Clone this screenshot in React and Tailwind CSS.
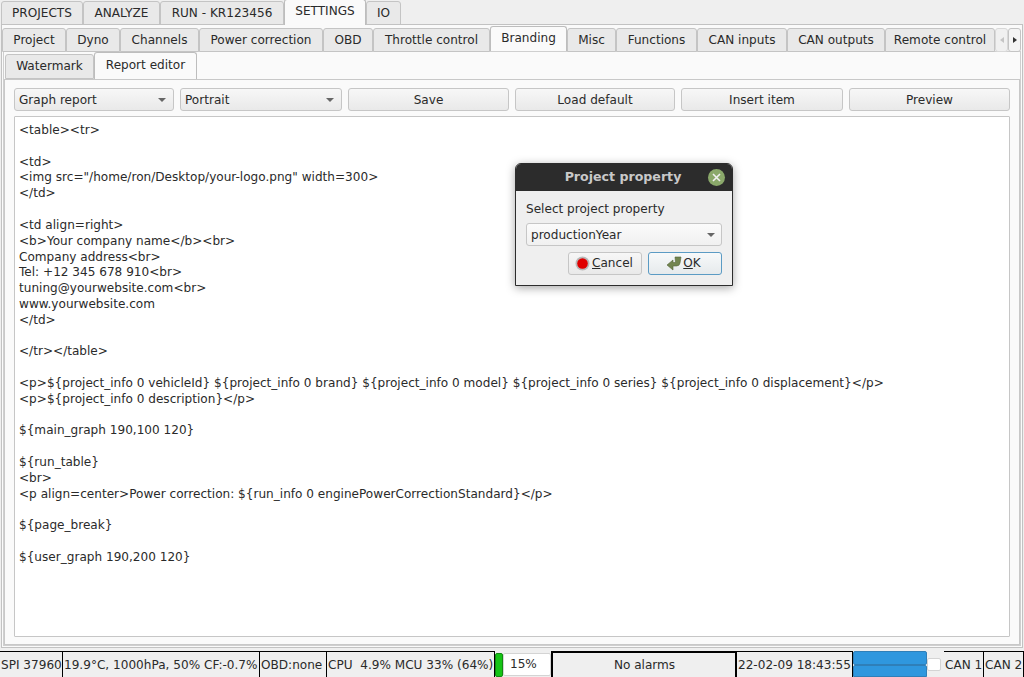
import React from "react";

const mainTabs = [
  { t: "PROJECTS", w: "w-[82px]" },
  { t: "ANALYZE", w: "w-[77px]" },
  { t: "RUN - KR123456", w: "w-[124px]" },
  { t: "SETTINGS", w: "w-[82px]", active: true },
  { t: "IO", w: "w-[35px]" },
];
const subTabs = [
  { t: "Project", w: "w-[64px]" },
  { t: "Dyno", w: "w-[54px]" },
  { t: "Channels", w: "w-[79px]" },
  { t: "Power correction", w: "w-[124px]" },
  { t: "OBD", w: "w-[50px]" },
  { t: "Throttle control", w: "w-[117px]" },
  { t: "Branding", w: "w-[77px]", active: true },
  { t: "Misc", w: "w-[49px]" },
  { t: "Functions", w: "w-[81px]" },
  { t: "CAN inputs", w: "w-[90px]" },
  { t: "CAN outputs", w: "w-[98px]" },
  { t: "Remote control", w: "w-[110px]" },
];
const code = `<table><tr>

<td>
<img src="/home/ron/Desktop/your-logo.png" width=300>
</td>

<td align=right>
<b>Your company name</b><br>
Company address<br>
Tel: +12 345 678 910<br>
tuning@yourwebsite.com<br>
www.yourwebsite.com
</td>

</tr></table>

<p>\${project_info 0 vehicleId} \${project_info 0 brand} \${project_info 0 model} \${project_info 0 series} \${project_info 0 displacement}</p>
<p>\${project_info 0 description}</p>

\${main_graph 190,100 120}

\${run_table}
<br>
<p align=center>Power correction: \${run_info 0 enginePowerCorrectionStandard}</p>

\${page_break}

\${user_graph 190,200 120}`;

function Tab({ t, w, active, h }) {
  return active ? (
    <div className={`${w} ${h} relative z-10 -mt-[2px] flex shrink-0 items-center justify-center rounded-t-[3px] border border-b-0 border-[#bdbdbd] bg-[#fafafa] pb-[2px] text-[#2a2a2a]`}>
      {t}
    </div>
  ) : (
    <div className={`${w} ${h} flex shrink-0 items-center justify-center rounded-t-[3px] border border-[#c4c4c4] bg-[#e9e9e9] text-[#2a2a2a]`}>
      {t}
    </div>
  );
}

function Combo({ t, w }) {
  return (
    <div className={`${w} flex h-[23px] shrink-0 items-center justify-between rounded-[3px] border border-[#c6c6c6] bg-gradient-to-b from-[#f7f7f7] to-[#e9e9e9] pl-[4px] pr-[7px] pt-[1px] text-[#2a2a2a]`}>
      <span>{t}</span>
      <Caret />
    </div>
  );
}
function Caret() {
  return (
    <svg width="8" height="4" viewBox="0 0 8 4"><path d="M0 0h8L4 4z" fill="#666" /></svg>
  );
}
function Btn({ t, w }) {
  return (
    <div className={`${w} flex h-[23px] shrink-0 items-center justify-center rounded-[3px] border border-[#c6c6c6] bg-gradient-to-b from-[#f7f7f7] to-[#e9e9e9] pt-[1px] text-[#2a2a2a]`}>
      {t}
    </div>
  );
}
function Cell({ w, children, center, thick }) {
  return (
    <div className={`${w} ${center ? "justify-center" : "justify-start"} ${thick ? "border-x-2 border-t-2 border-black" : "border-r border-t border-black"} flex h-full shrink-0 items-center overflow-hidden whitespace-nowrap bg-[#efefef] pl-[1px] pt-[1px] text-[#2a2a2a]`}>
      {children}
    </div>
  );
}

export default function App() {
  return (
    <div className="relative flex h-[677px] w-[1024px] flex-col overflow-hidden bg-[#efefef] font-['DejaVu_Sans',sans-serif] text-[12.08px]">
      {/* main tabs */}
      <div className="flex h-[24px] shrink-0 pl-[1px] pt-[1px]">
        {mainTabs.map((x) => (
          <Tab key={x.t} {...x} h={x.active ? "h-[26px]" : "h-[24px]"} />
        ))}
      </div>
      {/* main pane */}
      <div className="mx-[1px] flex h-[624px] shrink-0 flex-col border border-[#c2c2c2] bg-[#fafafa] pt-[3px]">
        <div className="relative flex h-[23px] shrink-0">
          {subTabs.map((x) => (
            <Tab key={x.t} {...x} h={x.active ? "h-[25px]" : "h-[24px]"} />
          ))}
          <div className="flex h-[24px] w-[13px] shrink-0 items-center justify-center rounded-[3px] border border-[#d8d8d8] bg-[#f0f0f0]">
            <svg width="4" height="6" viewBox="0 0 4 6"><path d="M4 0v6L0 3z" fill="#c4c4c4" /></svg>
          </div>
          <div className="flex h-[24px] w-[13px] shrink-0 items-center justify-center rounded-[3px] border border-[#c4c4c4] bg-[#f4f4f4]">
            <svg width="4" height="6" viewBox="0 0 4 6"><path d="M0 0v6L4 3z" fill="#333" /></svg>
          </div>
        </div>
        <div className="mx-[1px] mb-[1px] flex min-h-0 flex-1 flex-col border border-[#cfcfcf] bg-[#fafafa] pt-[2px]">
          <div className="flex h-[25px] shrink-0 pl-[1px]">
            <Tab t="Watermark" w="w-[89px]" h="h-[25px]" />
            <Tab t="Report editor" w="w-[103px]" h="h-[27px]" active />
          </div>
          <div className="flex min-h-0 flex-1 flex-col border border-[#c8c8c8] bg-[#fafafa] px-[9px] pb-[7px] pt-[8px]">
            <div className="flex h-[23px] shrink-0 gap-[6px]">
              <Combo t="Graph report" w="w-[160px]" />
              <Combo t="Portrait" w="w-[162px]" />
              <Btn t="Save" w="w-[161px]" />
              <Btn t="Load default" w="w-[160px]" />
              <Btn t="Insert item" w="w-[162px]" />
              <Btn t="Preview" w="w-[161px]" />
            </div>
            <pre className="mt-[5px] min-h-0 flex-1 overflow-hidden rounded-[1px] border border-[#c6c6c6] bg-white pl-[4px] pt-[6px] font-['DejaVu_Sans',sans-serif] text-[12.08px] leading-[15.81px] text-[#2a2a2a]">
              {code}
            </pre>
          </div>
        </div>
      </div>
      {/* status bar */}
      <div className="mt-[3px] flex h-[26px] shrink-0 items-stretch">
        <Cell w="w-[63px]">SPI 37960</Cell>
        <Cell w="w-[197px]">19.9°C, 1000hPa, 50% CF:-0.7%</Cell>
        <Cell w="w-[67px]">OBD:none</Cell>
        <Cell w="w-[168px]">CPU&nbsp; 4.9% MCU 33% (64%)</Cell>
        <div className="flex w-[56px] shrink-0 items-stretch pt-[2px]">
          <div className="w-[8px] rounded-[2px] border border-[#128a12] bg-[#16c416]" />
          <div className="flex h-[23px] w-[48px] items-center rounded-[2px] border border-[#d4d4d4] bg-white pl-[6px] text-[#2a2a2a]">15%</div>
        </div>
        <Cell w="w-[186px]" center thick>No alarms</Cell>
        <Cell w="w-[116px]">22-02-09 18:43:55</Cell>
        <div className="flex w-[74px] shrink-0 flex-col">
          <div className="h-[14px] rounded-[2px] border border-[#2f7fb8] bg-[#2f97de]" />
          <div className="h-[12px] rounded-t-[2px] border border-[#2f7fb8] bg-[#2f97de]" />
        </div>
        <div className="flex w-[17px] shrink-0 items-start pt-[7px]">
          <div className="h-[13px] w-[14px] rounded-[2px] border border-[#d4d4d4] bg-white" />
        </div>
        <Cell w="w-[40px]">CAN 1</Cell>
        <Cell w="w-[40px]">CAN 2</Cell>
      </div>

      {/* modal dialog */}
      <div className="absolute left-[515px] top-[163px] flex h-[123px] w-[218px] flex-col overflow-hidden rounded-t-[6px] border border-[#2d2d2d] bg-[#efefef] shadow-[0_2px_10px_rgba(0,0,0,0.35)]">
        <div className="relative flex h-[27px] shrink-0 items-center justify-center bg-[#2c2c2c] pr-[2px] text-[12.6px] font-bold text-[#c9c9c9]">
          Project property
          <div className="absolute right-[7px] top-[5px] flex h-[17px] w-[17px] items-center justify-center rounded-full bg-[#8aa86a]">
            <svg width="9" height="9" viewBox="0 0 9 9"><path d="M1 1l7 7M8 1L1 8" stroke="#f0f0f0" strokeWidth="1.6" /></svg>
          </div>
        </div>
        <div className="flex flex-1 flex-col px-[10px] pt-[11px]">
          <div className="leading-[15px] text-[#2a2a2a]">Select project property</div>
          <div className="mt-[6px] flex h-[23px] items-center justify-between rounded-[3px] border border-[#c6c6c6] bg-gradient-to-b from-[#fbfbfb] to-[#f0f0f0] pl-[4px] pr-[6px] pt-[1px] text-[#2a2a2a]">
            <span>productionYear</span>
            <Caret />
          </div>
          <div className="mt-[6px] flex justify-end gap-[6px]">
            <div className="flex h-[23px] w-[74px] items-center justify-center gap-[2px] rounded-[3px] border border-[#c6c6c6] bg-gradient-to-b from-[#f7f7f7] to-[#e9e9e9] pr-[2px] text-[#2a2a2a]">
              <svg width="15" height="15" viewBox="0 0 15 15">
                <circle cx="7.5" cy="7.5" r="7" fill="#b9b9b9" />
                <circle cx="7.5" cy="7.5" r="5.300" fill="#e00000" />
              </svg>
              <span><span className="underline">C</span>ancel</span>
            </div>
            <div className="flex h-[23px] w-[74px] items-center justify-center gap-[1px] rounded-[3px] border border-[#5b9bc4] bg-gradient-to-b from-[#f7f9fa] to-[#e6eaec] pr-[3px] text-[#2a2a2a]">
              <svg width="16" height="15" viewBox="0 0 16 15">
                <path d="M9 1h6l-1 6q-.5 3-3.500 3H7v4L1 9l6-5v2.500h2.500z" fill="#72854f" stroke="#55653a" strokeWidth="0.6" />
              </svg>
              <span><span className="underline">O</span>K</span>
            </div>
          </div>
        </div>
      </div>
    </div>
  );
}
